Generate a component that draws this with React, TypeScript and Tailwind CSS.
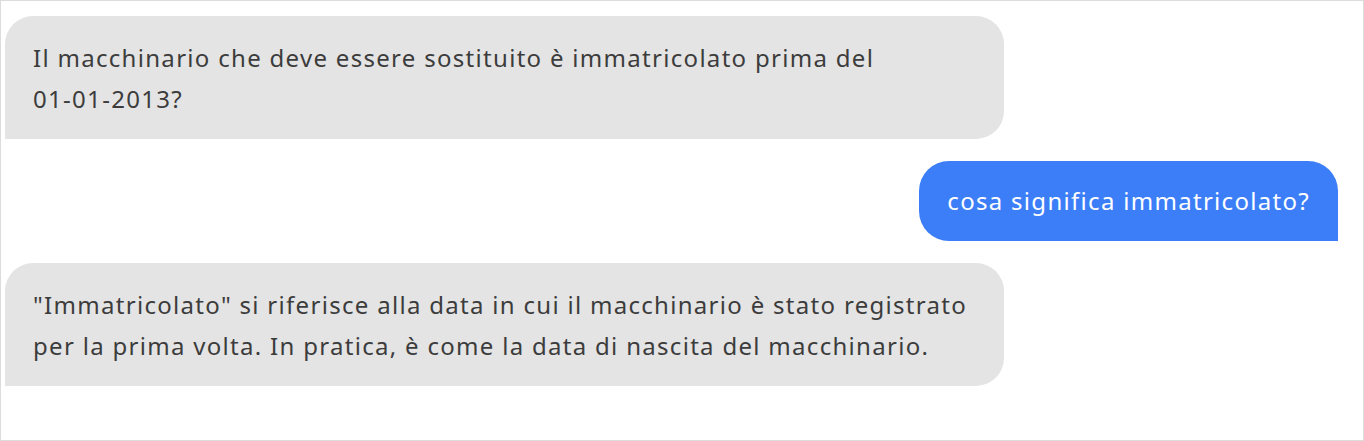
import type { ReactNode } from 'react';

const font = { fontFamily: '"Noto Sans", "Open Sans", sans-serif' };

function BotBubble({ children }: { children: ReactNode }) {
  return (
    <div className="w-[999px] rounded-[28px] rounded-bl-none bg-[#e4e4e4] px-[28px] pb-[20px] pt-[21px] text-[24px] leading-[41px] tracking-[1.3px] text-[#3c3c3c]">
      {children}
    </div>
  );
}

function UserBubble({ children }: { children: ReactNode }) {
  return (
    <div className="flex justify-end">
      <div className="rounded-[30px] rounded-br-none bg-[#3b7ef8] px-[28px] pb-[20px] pt-[19px] text-[24px] leading-[41px] tracking-[1.3px] text-white">
        {children}
      </div>
    </div>
  );
}

export default function App() {
  return (
    <div className="h-[441px] w-[1364px] bg-white" style={font}>
      <div className="flex h-full flex-col gap-[22px] border border-[#dcdcdc] pb-4 pl-[4px] pr-[25px] pt-[15px]">
        <BotBubble>
          Il macchinario che deve essere sostituito è immatricolato prima del{' '}
          <span className="whitespace-nowrap">01-01-2013?</span>
        </BotBubble>
        <UserBubble>cosa significa immatricolato?</UserBubble>
        <BotBubble>
          "Immatricolato" si riferisce alla data in cui il macchinario è stato registrato per la prima volta. In pratica, è come la data di nascita del macchinario.
        </BotBubble>
      </div>
    </div>
  );
}
